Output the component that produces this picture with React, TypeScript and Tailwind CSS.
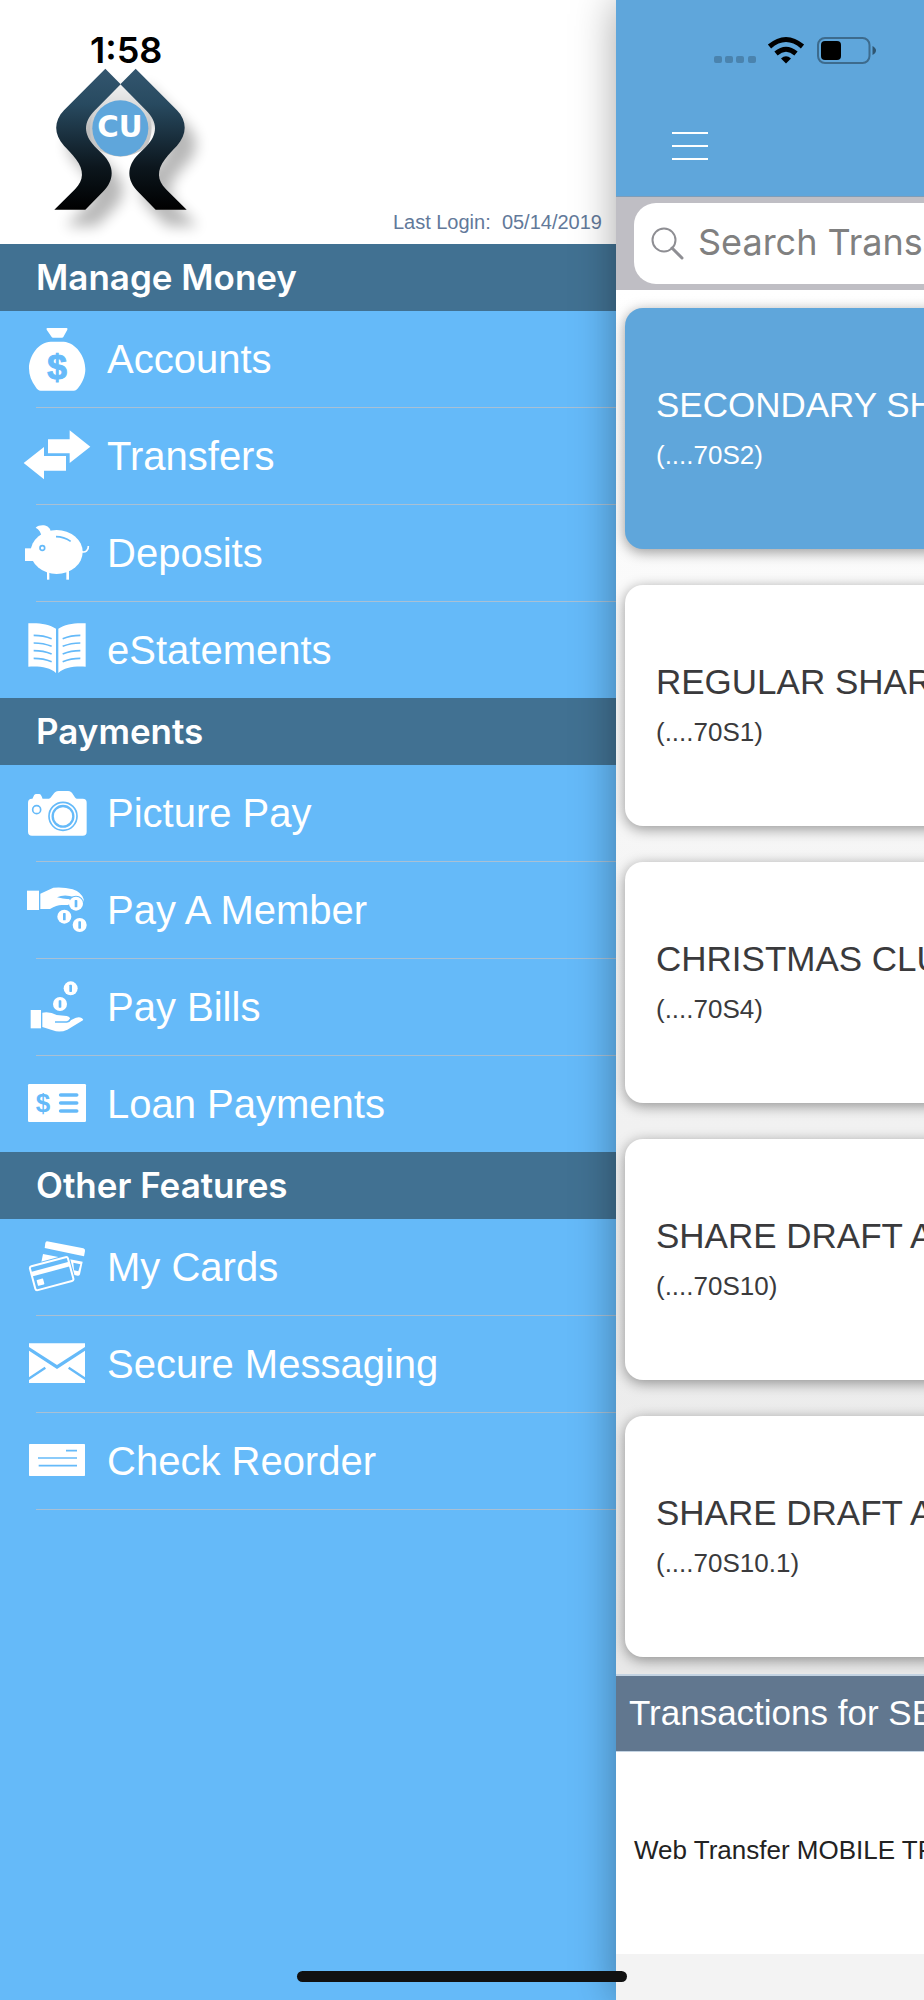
import { ReactNode } from 'react';

const BLUE = '#65baf9';

/* Every menu icon is drawn on the same 70x96 board, three units to a pixel */
function IconBoard({ children }: { children: ReactNode }) {
    return (
        <svg
            viewBox="0 0 210 288"
            className="w-[70px] h-24 shrink-0 text-white"
            fill="currentColor"
            aria-hidden="true"
        >
            {children}
        </svg>
    );
}

function Coin({ x, y }: { x: number; y: number }) {
    return (
        <>
            <circle cx={x} cy={y} r="24" fill={BLUE} />
            <circle cx={x} cy={y} r="21" />
            <rect x={x - 4} y={y - 11} width="8" height="22" rx="2" fill={BLUE} />
        </>
    );
}

const MoneyBagIcon = () => (
    <IconBoard>
        <g transform="translate(-66 -213)">
            <path d="M142 264H200Q204 264 202 269L190 291Q189 293 186 293H159Q156 293 155 291L140 269Q138 264 142 264Z" />
            <path d="M122 452C116 452 112 449 107 441C94 424 87 405 87 385C87 348 116 305 152 305H191C227 308 256 348 256 388C256 406 249 426 236 442C231 449 228 452 221 452Z" />
            <text
                x="171"
                y="418"
                textAnchor="middle"
                fontSize="106"
                fontWeight="700"
                fill={BLUE}
                stroke={BLUE}
                strokeWidth="3"
                className="font-['Liberation_Sans',sans-serif]"
            >
                $
            </text>
        </g>
    </IconBoard>
);

const TransferIcon = () => (
    <IconBoard>
        <g transform="translate(-66 -504)">
            <path d="M144 598H209V571L271 620L209 669V640H144Z" />
            <path d="M71 669L132 621V648H198V692H132V718Z" />
        </g>
    </IconBoard>
);

const PiggyIcon = () => (
    <IconBoard>
        <g transform="translate(-66 -75)">
            <ellipse cx="170" cy="216" rx="78" ry="66" />
            <path d="M107 143C120 132 147 133 152 153L125 172C124 158 117 148 107 143Z" />
            <rect x="75" y="205" width="30" height="38" />
            <rect x="141" y="272" width="7" height="27" />
            <rect x="199" y="272" width="8" height="27" />
            <path d="M244 215C257 219 266 211 265 198" fill="none" stroke="currentColor" strokeWidth="5" />
            <circle cx="127" cy="204" r="7" fill="none" stroke={BLUE} strokeWidth="5" />
            <path d="M168 170C185 170 199 175 212 184" fill="none" stroke={BLUE} strokeWidth="5" />
        </g>
    </IconBoard>
);

const BookIcon = () => (
    <IconBoard>
        <g transform="translate(-66 -366)">
            <path d="M85 430C115 428 148 432 168 446V579C150 562 120 558 85 560Z" />
            <path d="M257 430C227 428 195 432 175 446V579C193 562 222 558 257 560Z" />
            {[0, 23, 46, 69].map((y) => (
                <path
                    key={y}
                    d="M101 466C120 466 140 470 155 476M241 466C222 466 203 470 188 476"
                    transform={`translate(0 ${y})`}
                    fill="none"
                    stroke={BLUE}
                    strokeWidth="5"
                />
            ))}
        </g>
    </IconBoard>
);

const CameraIcon = () => (
    <IconBoard>
        <g transform="translate(-66 -225)">
            <rect x="84" y="326" width="176" height="111" rx="12" />
            <path d="M145 328C158 322 160 303 176 303H204C219 303 220 322 232 328Z" />
            <path d="M97 328C102 315 103 312 110 312H117C123 312 125 318 128 328Z" />
            <circle cx="189" cy="379" r="42" fill="none" stroke={BLUE} strokeWidth="5" />
            <circle cx="189" cy="379" r="31" fill="none" stroke={BLUE} strokeWidth="7" />
            <circle cx="110" cy="359" r="12" fill="none" stroke={BLUE} strokeWidth="5" />
        </g>
    </IconBoard>
);

const GiveIcon = () => (
    <IconBoard>
        <g transform="translate(-66 -516)">
            <rect x="81" y="602" width="36" height="58" />
            <path d="M121 611L160 593Q190 590 218 598Q246 608 251 628V636L228 624L212 632V645H185Q170 645 150 657H121Z" />
            <path d="M171 622Q192 611 222 621L207 628Q188 626 171 622Z" fill={BLUE} />
            <Coin x={228} y={641} />
            <path d="M171 625Q192 629 207 628Q215 634 213 641Q208 645 185 645H165Z" />
            <Coin x={193} y={680} />
            <Coin x={239} y={705} />
        </g>
    </IconBoard>
);

const ReceiveIcon = () => (
    <IconBoard>
        <g transform="translate(-66 -87)">
            <rect x="92" y="240" width="31" height="55" />
            <path d="M127 248Q150 244 170 255L200 258Q210 260 210 267L207 273L228 263Q245 259 250 270L202 299Q180 309 158 301L127 291Z" />
            <path d="M165 276H200Q208 275 211 268" fill="none" stroke={BLUE} strokeWidth="5" />
            <Coin x={180} y={222} />
            <Coin x={212} y={175} />
        </g>
    </IconBoard>
);

const LoanIcon = () => (
    <IconBoard>
        <g transform="translate(-66 -378)">
            <rect x="84" y="462" width="174" height="114" rx="4" />
            <text
                x="129"
                y="546"
                textAnchor="middle"
                fontSize="78"
                fontWeight="700"
                fill={BLUE}
                className="font-['Liberation_Sans',sans-serif]"
            >
                $
            </text>
            <path d="M182 495H230M182 519H230M182 543H230" stroke={BLUE} strokeWidth="11" strokeLinecap="round" />
        </g>
    </IconBoard>
);

const CardsIcon = () => (
    <IconBoard>
        <g transform="translate(-66 -207)">
            <path d="M141 274L250 295Q256 297 255 303L252 319L134 294L136 279Q137 274 141 274Z" />
            <path d="M129 312L248 335L240 373Q239 378 233 377L121 352Z" />
            <path d="M220 338L241 343L235 364L222 361Z" fill={BLUE} />
            <g transform="rotate(-15 155 371)">
                <rect x="90" y="328" width="130" height="86" rx="9" fill={BLUE} />
                <rect x="96" y="334" width="118" height="74" rx="6" fill="none" stroke="currentColor" strokeWidth="6" />
                <rect x="96" y="350" width="118" height="14" />
                <rect x="106" y="378" width="20" height="18" rx="2" />
            </g>
        </g>
    </IconBoard>
);

const EnvelopeIcon = () => (
    <IconBoard>
        <g transform="translate(-66 -498)">
            <path d="M87 580H255V591L171 645L87 591Z" />
            <path d="M87 602L171 657L255 602V699H87Z" />
            <path d="M84 688L136 653M258 688L206 653" stroke={BLUE} strokeWidth="7" />
        </g>
    </IconBoard>
);

const CheckIcon = () => (
    <IconBoard>
        <g transform="translate(-66 -69)">
            <rect x="87" y="162" width="168" height="96" rx="2" />
            <path d="M198 182H231M114 204H231M116 227H231" stroke={BLUE} strokeWidth="5" />
        </g>
    </IconBoard>
);

const sections = [
    {
        title: 'Manage Money',
        items: [
            { label: 'Accounts', Icon: MoneyBagIcon },
            { label: 'Transfers', Icon: TransferIcon },
            { label: 'Deposits', Icon: PiggyIcon },
            { label: 'eStatements', Icon: BookIcon },
        ],
    },
    {
        title: 'Payments',
        items: [
            { label: 'Picture Pay', Icon: CameraIcon },
            { label: 'Pay A Member', Icon: GiveIcon },
            { label: 'Pay Bills', Icon: ReceiveIcon },
            { label: 'Loan Payments', Icon: LoanIcon },
        ],
    },
    {
        title: 'Other Features',
        items: [
            { label: 'My Cards', Icon: CardsIcon },
            { label: 'Secure Messaging', Icon: EnvelopeIcon },
            { label: 'Check Reorder', Icon: CheckIcon },
        ],
    },
];

const accounts = [
    { name: 'SECONDARY SHARE', number: '(....70S2)', active: true },
    { name: 'REGULAR SHARE', number: '(....70S1)' },
    { name: 'CHRISTMAS CLUB', number: '(....70S4)' },
    { name: 'SHARE DRAFT ACCOUNT', number: '(....70S10)' },
    { name: 'SHARE DRAFT ACCOUNT', number: '(....70S10.1)' },
];

const LEFT_RIBBON =
    'M316 205L362 252L285 330C249 366 249 402 285 439L308 462C344 498 344 540 308 575L256 628H163L225 567C252 540 253 510 228 477C216 460 205 450 192 436C161 402 161 362 192 330Z';
const RIGHT_RIBBON =
    'M407 205L361 252L438 330C474 366 474 402 438 439L415 462C379 498 379 540 415 575L467 628H560L498 567C471 540 470 510 495 477C507 460 518 450 531 436C562 402 562 362 531 330Z';

function Logo() {
    return (
        <svg viewBox="150 197 480 534" className="w-40 h-[178px]" role="img" aria-label="CU">
            <defs>
                <linearGradient id="ribbon" x1="0" y1="205" x2="0" y2="628" gradientUnits="userSpaceOnUse">
                    <stop offset="0" stopColor="#33566f" />
                    <stop offset="0.25" stopColor="#284a60" />
                    <stop offset="0.7" stopColor="#0c161d" />
                    <stop offset="1" stopColor="#000" />
                </linearGradient>
                <linearGradient id="halo" x1="0" y1="252" x2="0" y2="380" gradientUnits="userSpaceOnUse">
                    <stop offset="0" stopColor="#f0f0f0" />
                    <stop offset="1" stopColor="#c6c6c6" />
                </linearGradient>
                <filter id="soft" x="-30%" y="-30%" width="160%" height="160%">
                    <feGaussianBlur stdDeviation="20" />
                </filter>
            </defs>
            <g transform="translate(34 50)" fill="#000" opacity="0.28" filter="url(#soft)">
                <path d={LEFT_RIBBON} />
                <path d={RIGHT_RIBBON} />
            </g>
            <path d="M362 252L440 330Q470 383 440 440Q361 498 285 440Q255 383 285 330Z" fill="url(#halo)" />
            <g fill="url(#ribbon)">
                <path d={LEFT_RIBBON} />
                <path d={RIGHT_RIBBON} />
            </g>
            <circle cx="361" cy="384" r="84" fill="#5fa6db" />
            <text
                x="360"
                y="411"
                textAnchor="middle"
                fontSize="88"
                fontWeight="700"
                fill="#fff"
                className="font-['DejaVu_Sans',sans-serif]"
            >
                CU
            </text>
        </svg>
    );
}

function StatusIcons() {
    return (
        <svg viewBox="0 0 168 32" className="w-[168px] h-8" aria-hidden="true">
            <g fill="#4a83ae">
                <rect x="4" y="22" width="8" height="7" rx="2" />
                <rect x="15" y="22" width="8" height="7" rx="2" />
                <rect x="26" y="22" width="8" height="7" rx="2" />
                <rect x="38" y="22" width="8" height="7" rx="2" />
            </g>
            <g fill="none" stroke="#000" strokeWidth="5">
                <path d="M59.5 12.5Q76 -1.5 92.5 12.5" />
                <path d="M66 19.5Q76 11 86 19.5" />
            </g>
            <path d="M71 24.5Q76 20 81 24.5L76 29.5Z" />
            <rect x="108" y="4" width="51.5" height="25" rx="7" fill="none" stroke="#3d6b8d" strokeWidth="2" />
            <rect x="111" y="7" width="20" height="19" rx="4" />
            <path d="M162.5 12Q166 14 166 16.5Q166 19 162.5 21Z" fill="#2f5672" />
        </svg>
    );
}

export default function App() {
    return (
        <div className="relative flex min-h-screen overflow-hidden font-['Liberation_Sans',Arial,sans-serif]">
            {/* Drawer */}
            <nav className="w-2/3 bg-[#65baf9] text-white">
                <header className="flex h-[244px] items-end justify-between bg-white pr-3.5">
                    <div className="pl-[50px]">
                        <p className="pl-10 font-['Inter',sans-serif] text-4xl leading-8 font-semibold text-black">
                            1:58
                        </p>
                        <Logo />
                    </div>
                    <p className="pb-2.5 text-xl leading-6 whitespace-pre text-[#62799a]">
                        Last Login:{'  '}05/14/2019
                    </p>
                </header>

                {sections.map((section) => (
                    <section key={section.title} className="group">
                        <h2 className="flex h-[67px] items-center bg-[#417192] pl-9 font-['Inter',sans-serif] text-[35px] font-semibold">
                            {section.title}
                        </h2>
                        <ul>
                            {section.items.map(({ label, Icon }) => (
                                <li key={label} className="group/item">
                                    <a href="#" className="flex h-24 items-center gap-[15px] pl-[22px] text-[40px]">
                                        <Icon />
                                        {label}
                                    </a>
                                    <div className="ml-9 h-px bg-[#a9c0d4] group-last/item:hidden group-last:group-last/item:block" />
                                </li>
                            ))}
                        </ul>
                    </section>
                ))}
            </nav>

            {/* Page pushed aside by the drawer */}
            <main className="relative z-10 flex w-1/3 flex-col bg-[#f3f3f3] shadow-[0_0_40px_rgba(0,0,0,0.35)]">
                <div className="flex min-h-0 flex-1 flex-col overflow-hidden whitespace-nowrap">
                    <header className="flex h-[197px] shrink-0 flex-col items-start justify-between border-b border-[#7f9db8] bg-[#5fa6db] pt-[34px] pb-9">
                        <div className="pl-[94px]">
                            <StatusIcons />
                        </div>
                        <button type="button" aria-label="Menu" className="ml-14 flex flex-col gap-[11px]">
                            <span className="h-0.5 w-9 bg-white" />
                            <span className="h-0.5 w-9 bg-white" />
                            <span className="h-0.5 w-9 bg-white" />
                        </button>
                    </header>

                    <div className="h-[93px] shrink-0 bg-[#bfbec4] pt-1.5 pl-[18px]">
                        <label className="flex h-[81px] w-[560px] items-center gap-3.5 rounded-[22px] bg-white pl-[17px]">
                            <svg viewBox="0 0 33 33" className="w-[33px] h-[33px]" fill="none" stroke="#8e8e93">
                                <circle cx="13" cy="13" r="11.5" strokeWidth="2" />
                                <path d="M21 21L31 31" strokeWidth="3" strokeLinecap="round" />
                            </svg>
                            <input
                                type="search"
                                aria-label="Search Transactions"
                                placeholder="Search Transactions"
                                className="w-[440px] pb-1 font-['Inter',sans-serif] text-4xl outline-none placeholder:text-[#808080]"
                            />
                        </label>
                    </div>

                    <div className="flex shrink-0 flex-col gap-9 bg-linear-to-b from-white to-[#e8e8e8] pt-[18px] pb-[17px] pl-[9px]">
                        {accounts.map((account) => (
                            <article
                                key={account.number}
                                className={`flex h-[241px] w-[560px] flex-col justify-center gap-3 rounded-[18px] pl-[31px] shadow-[0_3px_14px_rgba(0,0,0,0.4)] ${
                                    account.active ? 'bg-[#5fa6db] text-white' : 'bg-white text-[#3a3a3c]'
                                }`}
                            >
                                <h3 className="text-[35px] leading-10">{account.name}</h3>
                                <p className="text-[26px] leading-9">{account.number}</p>
                            </article>
                        ))}
                    </div>

                    <h2 className="flex h-[78px] shrink-0 items-center border-t-2 border-b border-[#c3d3e2] bg-[#61778f] pl-[13px] text-[35px] text-white">
                        Transactions for SECONDARY SHARE
                    </h2>
                    <div className="flex h-[202px] shrink-0 items-center bg-white pb-1.5 pl-[18px] text-[26px] text-[#222]">
                        Web Transfer MOBILE TRANSFER
                    </div>
                </div>
            </main>

            {/* Home indicator */}
            <div className="absolute bottom-[18px] left-1/2 z-20 h-[11px] w-[330px] -translate-x-1/2 rounded-full bg-[#111]" />
        </div>
    );
}
